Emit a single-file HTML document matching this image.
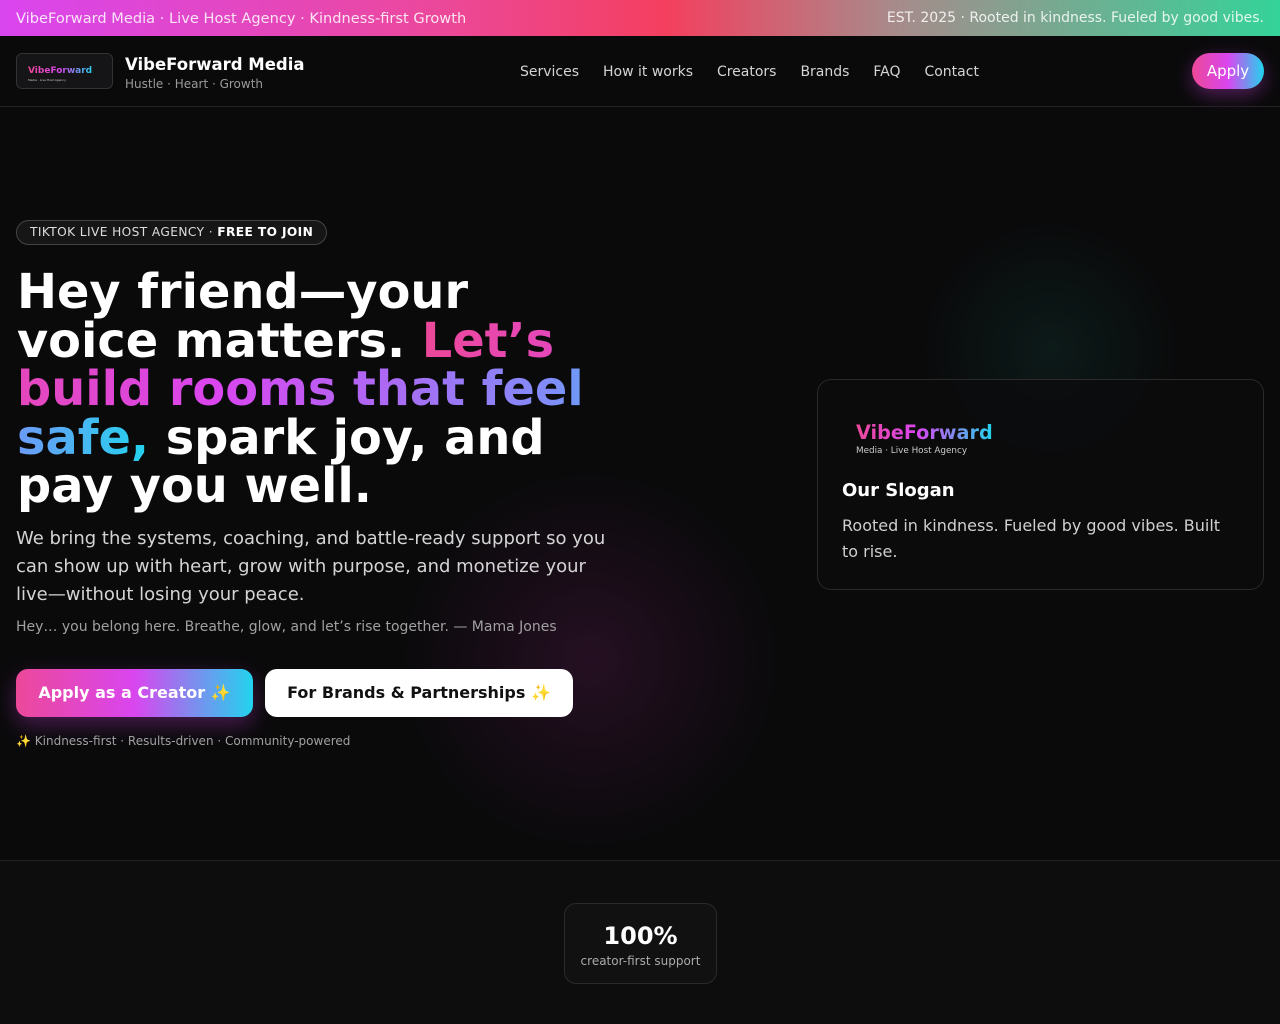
<!DOCTYPE html>
<html><head><meta charset="utf-8"><style>
*{box-sizing:border-box;margin:0;padding:0}
body{width:1280px;height:1024px;overflow:hidden;background:#0a0a0b;font-family:"DejaVu Sans","Liberation Sans",sans-serif;color:#fff;position:relative}
.top{height:36px;background:linear-gradient(90deg,#d946ef 0%,#ec4899 35%,#f43f5e 52%,#a78b8b 70%,#34d399 100%);display:flex;justify-content:space-between;align-items:center;padding:0 16px;font-size:14.6px;color:rgba(255,255,255,.85)}
.top span+span{font-size:14px}
.hdr{height:71px;border-bottom:1px solid #222;position:relative}
.logo{position:absolute;left:16px;top:17px;width:97px;height:36px;border:1px solid #333;border-radius:6px;background:#151517}
.logo b{position:absolute;left:11px;top:12px;font-size:9px;background:linear-gradient(90deg,#ec4899,#d946ef,#22d3ee);-webkit-background-clip:text;color:transparent}
.logo i{position:absolute;left:11px;top:24px;font-size:3px;color:#ccc;font-style:normal}
.brand{position:absolute;left:125px;top:19px}
.brand .t{font-size:16.5px;font-weight:bold}
.brand .s{font-size:12px;color:#9a9a9a;margin-top:3px}
nav{position:absolute;left:520px;top:28px;font-size:14px;color:#d4d4d4}
nav span{margin-right:19.5px}
.apply{position:absolute;left:1192px;top:53px;width:72px;height:36px;border-radius:18px;background:linear-gradient(90deg,#ec4899,#d946ef,#22d3ee);font-size:15px;text-align:center;line-height:36px;box-shadow:0 6px 18px rgba(217,70,239,.35)}
.glow1{position:absolute;left:380px;top:460px;width:420px;height:400px;border-radius:50%;background:radial-gradient(circle,rgba(160,40,140,.18),rgba(0,0,0,0) 65%)}
.glow2{position:absolute;left:900px;top:220px;width:300px;height:260px;border-radius:50%;background:radial-gradient(circle,rgba(20,90,80,.2),rgba(0,0,0,0) 65%)}
.pill{position:absolute;left:16px;top:220px;height:25px;padding:0 13px;border:1px solid #444;border-radius:13px;background:#161617;font-size:12.2px;line-height:23px;color:#ddd;letter-spacing:.4px}
.pill b{color:#fff}
h1{position:absolute;left:17px;top:269px;width:605px;font-size:47.8px;line-height:48.5px;font-weight:bold}
.g{background:linear-gradient(90deg,#ec4899 0%,#d946ef 40%,#818cf8 80%,#22d3ee 100%);-webkit-background-clip:text;background-clip:text;color:transparent;-webkit-box-decoration-break:slice}
.p{position:absolute;left:16px;top:525px;width:598px;font-size:18px;line-height:28px;color:#d4d4d4}
.q{position:absolute;left:16px;top:619px;font-size:14px;color:#a0a0a0}
.b1{position:absolute;left:16px;top:669px;width:237px;height:48px;border-radius:12px;background:linear-gradient(90deg,#ec4899,#d946ef 50%,#22d3ee);font-size:16px;font-weight:bold;text-align:center;line-height:48px;box-shadow:0 8px 22px rgba(217,70,239,.3)}
.b2{position:absolute;left:265px;top:669px;width:308px;height:48px;border-radius:12px;background:#fff;color:#111;font-size:16px;font-weight:bold;text-align:center;line-height:48px}
.sp{color:#fbbf24;font-weight:normal}
.tag{position:absolute;left:16px;top:734px;font-size:12px;color:#a0a0a0}
.card{position:absolute;left:817px;top:379px;width:447px;height:211px;border:1px solid #2a2a2a;border-radius:14px;background:rgba(12,12,13,.85)}
.card .l{position:absolute;left:38px;top:41px;font-size:19.2px;font-weight:bold;background:linear-gradient(90deg,#ec4899,#d946ef 45%,#22d3ee);-webkit-background-clip:text;color:transparent}
.card .m{position:absolute;left:38px;top:66px;font-size:8.8px;color:#ccc}
.card h3{position:absolute;left:24px;top:100px;font-size:18px}
.card p{position:absolute;left:24px;top:133px;width:385px;font-size:16px;line-height:26px;color:#cfcfcf}
.line{position:absolute;left:0;top:860px;width:1280px;height:1px;background:#222}
.sec{position:absolute;left:0;top:861px;width:1280px;height:163px;background:#0d0d0e}
.stat{position:absolute;left:564px;top:903px;width:153px;height:81px;border:1px solid #2a2a2a;border-radius:12px;background:#111;text-align:center}
.stat b{display:block;font-size:24px;margin-top:18px}
.stat span{font-size:12px;color:#aaa}
</style></head><body>
<div class="top"><span>VibeForward Media · Live Host Agency · Kindness-first Growth</span><span>EST. 2025 · Rooted in kindness. Fueled by good vibes.</span></div>
<div class="hdr">
<div class="logo"><b>VibeForward</b><i>Media · Live Host Agency</i></div>
<div class="brand"><div class="t">VibeForward Media</div><div class="s">Hustle · Heart · Growth</div></div>
<nav><span>Services</span> <span>How it works</span> <span>Creators</span> <span>Brands</span> <span>FAQ</span> <span>Contact</span></nav>
</div>
<div class="apply">Apply</div>
<div class="glow1"></div><div class="glow2"></div>
<div class="pill">TIKTOK LIVE HOST AGENCY · <b>FREE TO JOIN</b></div>
<h1>Hey friend—your<br>voice matters. <span class="g">Let’s<br>build rooms that feel safe,</span> spark joy, and pay you well.</h1>
<div class="p">We bring the systems, coaching, and battle-ready support so you can show up with heart, grow with purpose, and monetize your live—without losing your peace.</div>
<div class="q">Hey… you belong here. Breathe, glow, and let’s rise together. — Mama Jones</div>
<div class="b1">Apply as a Creator <span class="sp">✨</span></div>
<div class="b2">For Brands &amp; Partnerships <span class="sp">✨</span></div>
<div class="tag"><span class="sp">✨</span> Kindness-first · Results-driven · Community-powered</div>
<div class="card"><div class="l">VibeForward</div><div class="m">Media · Live Host Agency</div><h3>Our Slogan</h3><p>Rooted in kindness. Fueled by good vibes. Built to rise.</p></div>
<div class="sec"></div><div class="line"></div>
<div class="stat"><b>100%</b><span>creator-first support</span></div>
</body></html>
